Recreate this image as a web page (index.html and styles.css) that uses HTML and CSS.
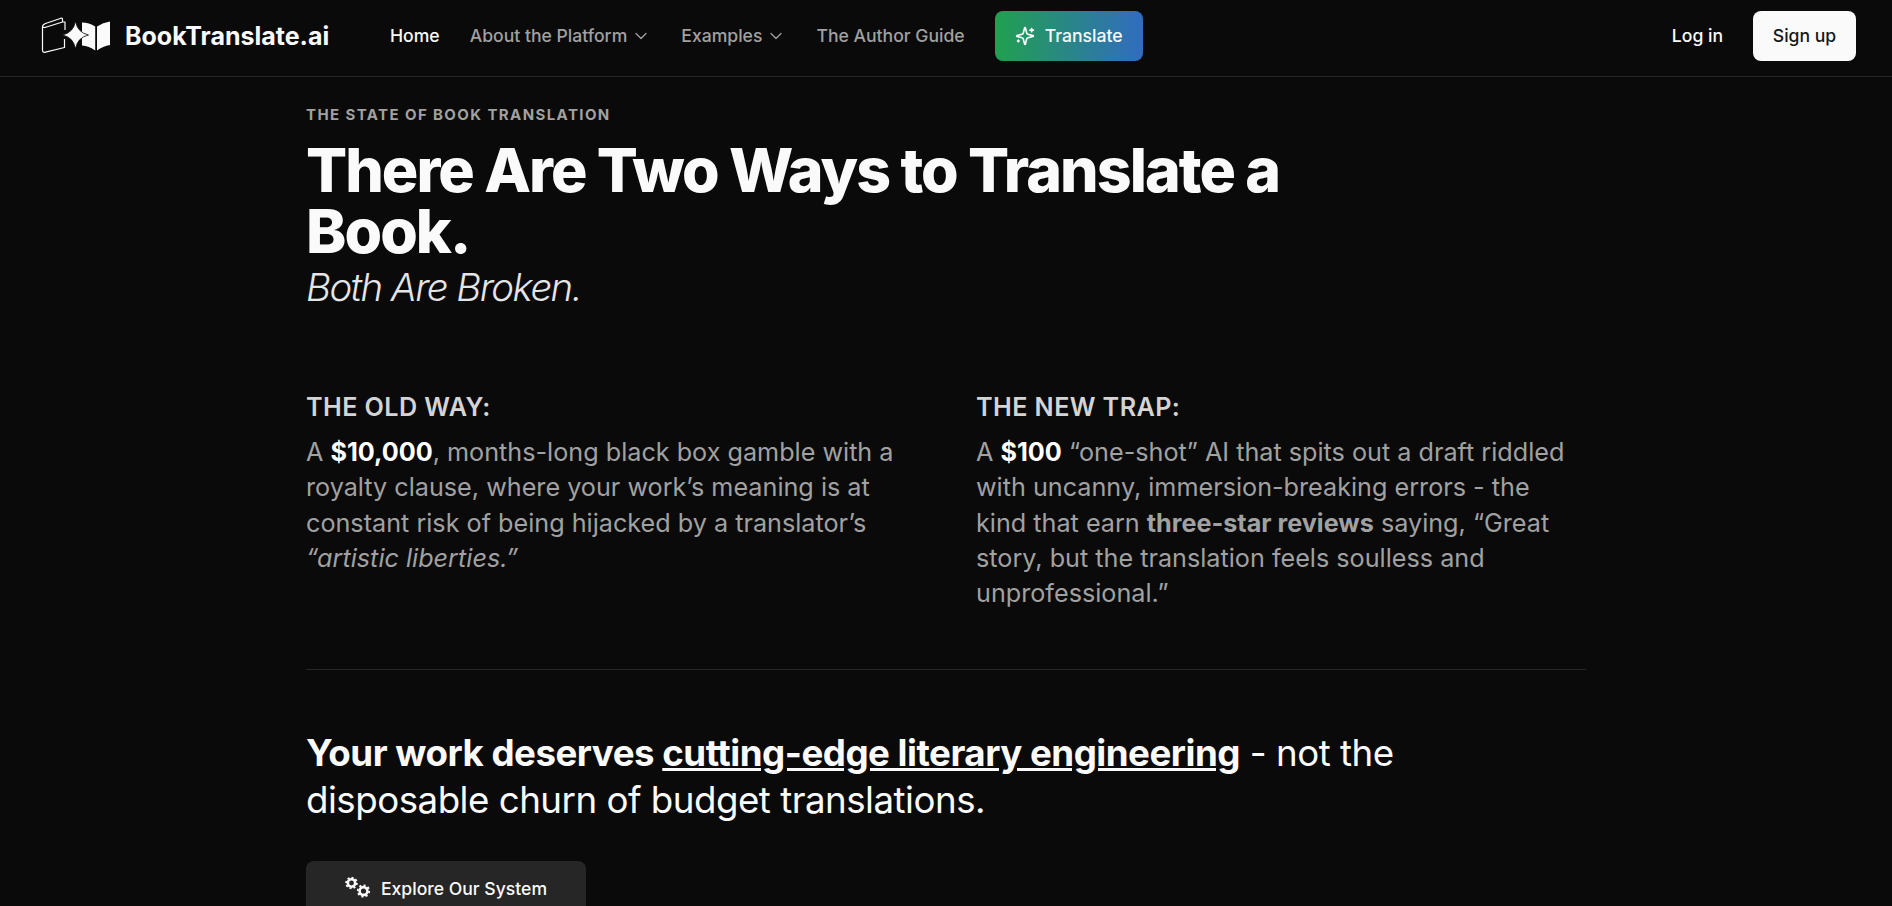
FILE: index.html
```html
<!DOCTYPE html>
<html lang="en">
<head>
<meta charset="utf-8">
<title>BookTranslate.ai</title>
<link rel="stylesheet" href="styles.css">
</head>
<body>
<header class="topbar">
  <a class="brand" href="#">
    <svg class="brand-icon" viewBox="40 16 72 40" width="72" height="40" aria-hidden="true">
      <path class="logo-line" d="M42.500 27 L42.500 50 Q42.500 53 45.500 52.200 L64.500 47.500 L64.500 39 M42.500 27 Q42.500 24.500 45.500 23.500 L61 18.200 Q62.500 17.800 62.500 19.500 L62.500 22 L46.500 27 Q43.500 28 42.500 27 M62.500 22 L65 22 L65 30" />
      <path class="logo-fill" d="M82 22.500 Q89 22.500 95.200 26.500 L95.200 50.500 Q89 46 82 45.500 Z" />
      <path class="logo-fill" d="M97 26.500 Q103 22.500 110 21.500 L110 45 Q103 46 97 50.500 Z" />
      <path class="logo-spark" d="M75.500 21.500 Q77.800 32.700 88.500 35 Q77.800 37.300 75.500 48.500 Q73.200 37.300 62.500 35 Q73.200 32.700 75.500 21.500Z" />
    </svg>
    <span class="brand-name">BookTranslate.ai</span>
  </a>
  <nav class="nav">
    <a class="nav-link active" href="#">Home</a>
    <a class="nav-link" href="#">About the Platform <svg class="chev" viewBox="0 0 24 24" width="20" height="20"><path d="m6 9 6 6 6-6"/></svg></a>
    <a class="nav-link" href="#">Examples <svg class="chev" viewBox="0 0 24 24" width="20" height="20"><path d="m6 9 6 6 6-6"/></svg></a>
    <a class="nav-link" href="#">The Author Guide</a>
    <a class="translate" href="#">
      <svg class="spark" viewBox="0 0 24 24" width="20" height="20"><path d="M9.937 15.500A2 2 0 0 0 8.500 14.063l-6.135-1.582a.5.5 0 0 1 0-.962L8.500 9.936A2 2 0 0 0 9.937 8.500l1.582-6.135a.5.5 0 0 1 .963 0L14.063 8.500A2 2 0 0 0 15.500 9.937l6.135 1.581a.5.5 0 0 1 0 .964L15.500 14.063a2 2 0 0 0-1.437 1.437l-1.582 6.135a.5.5 0 0 1-.963 0z"/><path d="M20 3v4M22 5h-4M4 17v2M5 18H3"/></svg>
      Translate
    </a>
  </nav>
  <div class="auth">
    <a class="login" href="#">Log in</a>
    <a class="signup" href="#">Sign up</a>
  </div>
</header>
<main class="page">
  <p class="eyebrow">THE STATE OF BOOK TRANSLATION</p>
  <h1 class="title">There Are Two Ways to Translate a Book.</h1>
  <p class="subtitle">Both Are Broken.</p>
  <section class="compare">
    <div class="col">
      <h3 class="col-title">THE OLD WAY:</h3>
      <p class="col-text">A <strong class="white">$10,000</strong>, months-long black box gamble with a royalty clause, where your work’s meaning is at constant risk of being hijacked by a translator’s <em>“artistic liberties.”</em></p>
    </div>
    <div class="col">
      <h3 class="col-title">THE NEW TRAP:</h3>
      <p class="col-text">A <strong class="white">$100</strong> “one-shot” AI that spits out a draft riddled with uncanny, immersion-breaking errors - the kind that earn <strong>three-star reviews</strong> saying, “Great story, but the translation feels soulless and unprofessional.”</p>
    </div>
  </section>
  <hr class="rule">
  <p class="pitch"><strong>Your work deserves <u>cutting-edge literary engineering</u></strong> - not the disposable churn of budget translations.</p>
  <a class="explore" href="#">
    <svg class="gears" viewBox="0 0 26 24" width="26" height="24">
      <circle class="gear-ring" cx="6.500" cy="7" r="3.700"/>
      <circle class="gear-teeth" cx="6.500" cy="7" r="5.400" pathLength="8"/>
      <circle class="gear-ring" cx="18.500" cy="15" r="3.900"/>
      <circle class="gear-teeth" cx="18.500" cy="15" r="5.700" pathLength="8"/>
    </svg>
    Explore Our System
  </a>
</main>
</body>
</html>
```
FILE: styles.css
```css
* { box-sizing: border-box; }
html, body { margin: 0; height: 906px; overflow: hidden; }
body { background: #0a0a0a; color: #fafafa; font-family: Inter, "Liberation Sans", sans-serif; }
a { color: inherit; text-decoration: none; }
.topbar { height: 77px; border-bottom: 1px solid #262626; display: flex; align-items: center; padding: 0 36px 4px 40px; }
.brand { display: flex; align-items: center; gap: 13px; width: 350px; }
.brand-icon { flex: none; }
.logo-line { fill: none; stroke: #fafafa; stroke-width: 1.200; stroke-linejoin: round; }
.logo-fill { fill: #fafafa; }
.logo-spark { fill: #fafafa; stroke: #0a0a0a; stroke-width: .8; }
.brand-name { font-size: 25px; font-weight: 700; line-height: 32px; color: #fafafa; }
.nav { display: flex; align-items: center; gap: 30px; }
.nav-link { font-size: 17.600px; line-height: 24px; font-weight: 500; color: #a1a1a1; display: flex; align-items: center; gap: 4px; }
.nav-link.active { color: #fafafa; }
.chev { fill: none; stroke: #a1a1a1; stroke-width: 1.500; stroke-linecap: round; stroke-linejoin: round; }
.translate { width: 148px; height: 50px; padding-bottom: 1px; border-radius: 8px; background: linear-gradient(90deg, #21a04f, #316cc0); display: flex; align-items: center; justify-content: center; gap: 10px; font-size: 17.600px; font-weight: 500; color: #fafafa; }
.spark { fill: none; stroke: #fafafa; stroke-width: 2; stroke-linecap: round; stroke-linejoin: round; }
.auth { margin-left: auto; display: flex; align-items: center; gap: 30px; }
.login { font-size: 17.600px; font-weight: 500; color: #fafafa; padding-bottom: 1px; }
.signup { width: 103px; height: 50px; padding-bottom: 1px; border-radius: 8px; background: #fafafa; color: #171717; font-size: 17.600px; font-weight: 500; display: flex; align-items: center; justify-content: center; }
.page { width: 1280px; margin: 0 0 0 306px; }
.eyebrow { margin: 28px 0 0; font-size: 15px; line-height: 20px; font-weight: 700; letter-spacing: 1.400px; color: #a1a1a1; }
.title { margin: 15px 0 0; width: 1024px; font-size: 60.800px; line-height: 61px; font-weight: 800; letter-spacing: -1.950px; color: #fafafa; }
.subtitle { margin: 2px 0 0; font-size: 38.400px; line-height: 46px; font-style: italic; font-weight: 300; letter-spacing: -1.550px; color: #e5e5e5; }
.compare { margin-top: 80px; display: grid; grid-template-columns: 600px 608px; column-gap: 70px; }
.col-title { margin: 0 0 10px; font-size: 25.200px; line-height: 35px; font-weight: 600; color: #d4d4d4; letter-spacing: .4px; }
.col-text { margin: 0; font-size: 25.200px; line-height: 35.280px; font-weight: 400; color: #a1a1a1; }
.col-text strong { font-weight: 700; }
.col-text .white { color: #fff; }
.rule { margin: 58px 0 0; border: 0; border-top: 1px solid #262626; }
.pitch { margin: 59px 0 0; width: 1100px; font-size: 36.700px; line-height: 47px; font-weight: 400; letter-spacing: -.5px; color: #fafafa; }
.pitch strong { font-weight: 700; }
.explore { margin-top: 38px; width: 280px; height: 54px; border-radius: 8px; background: #262626; display: flex; align-items: center; justify-content: center; gap: 10px; font-size: 17.600px; font-weight: 500; color: #fafafa; }
.gears { flex: none; }
.gear-ring { fill: none; stroke: #fafafa; stroke-width: 2.600; }
.gear-teeth { fill: none; stroke: #fafafa; stroke-width: 1.800; stroke-dasharray: .5 .5; }
```
